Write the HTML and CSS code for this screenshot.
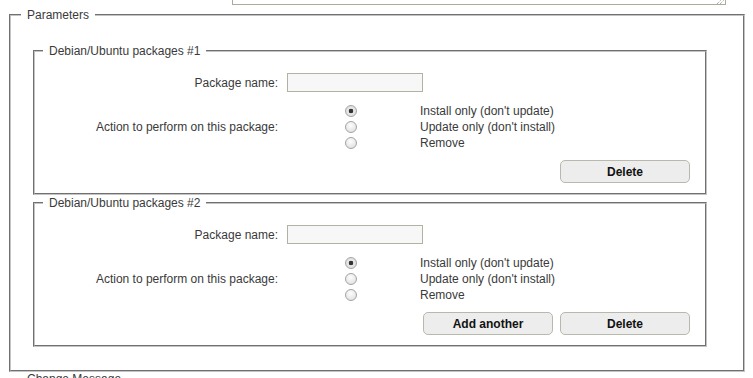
FILE: index.html
```html
<!DOCTYPE html>
<html lang="en">
<head>
  <meta charset="UTF-8" />
  <title>Package parameters</title>
  <link rel="stylesheet" href="styles.css">
</head>
<body>

<!-- tail of the previous field -->
<div class="prev-field">
  <svg class="grip" width="8" height="5" viewBox="0 0 8 5">
    <path d="M1 5 L6 0 M4 5 L8 1" stroke="#8a8a8a" stroke-width="1" stroke-dasharray="1 1" fill="none"/>
  </svg>
</div>

<!-- Parameters -->
<fieldset class="module">
  <legend>Parameters</legend>

  <fieldset class="pkg">
    <legend>Debian/Ubuntu packages #1</legend>
    <div class="row">
      <label class="lbl" for="name1">Package name:</label>
      <input id="name1" class="text" type="text">
    </div>
    <div class="row row-action">
      <span class="lbl">Action to perform on this package:</span>
      <div class="choices">
        <input type="radio" name="act1" id="a1i" checked><label for="a1i">Install only (don't update)</label>
        <input type="radio" name="act1" id="a1u"><label for="a1u">Update only (don't install)</label>
        <input type="radio" name="act1" id="a1r"><label for="a1r">Remove</label>
      </div>
    </div>
    <div class="actions">
      <button type="button">Delete</button>
    </div>
  </fieldset>

  <fieldset class="pkg">
    <legend>Debian/Ubuntu packages #2</legend>
    <div class="row">
      <label class="lbl" for="name2">Package name:</label>
      <input id="name2" class="text" type="text">
    </div>
    <div class="row row-action">
      <span class="lbl">Action to perform on this package:</span>
      <div class="choices">
        <input type="radio" name="act2" id="a2i" checked><label for="a2i">Install only (don't update)</label>
        <input type="radio" name="act2" id="a2u"><label for="a2u">Update only (don't install)</label>
        <input type="radio" name="act2" id="a2r"><label for="a2r">Remove</label>
      </div>
    </div>
    <div class="actions">
      <button type="button">Add another</button>
      <button type="button">Delete</button>
    </div>
  </fieldset>
</fieldset>

<!-- Change Message -->
<fieldset class="module next">
  <legend>Change Message</legend>
</fieldset>

</body>
</html>
```

FILE: styles.css
```css
* {
  box-sizing: border-box;
}

html, body {
  margin: 0;
  padding: 0;
  font-family: "Liberation Sans", Arial, sans-serif;
  font-size: 12px;
  color: #3a3a3a;
  background-color: #fff;
}

.prev-field {
  position: relative;
  margin-left: 232px;
  width: 494px;
  height: 5px;
  border: 1px solid #aaad9c;
  border-top: none;
}

.grip {
  position: absolute;
  right: 1px;
  bottom: 0;
}

fieldset {
  margin: 0;
  min-width: 0;
  border: 2px groove #c4c4c4;
}

legend {
  padding: 0 6px;
  line-height: 14px;
}

.module {
  margin: 3px 8px 0 9px;
  padding: 22px 10px 23px;
}

.next {
  margin-top: 0;
}

.pkg {
  margin: 0 26px 0 12px;
  padding: 15px 15px 10px 8px;
}

.pkg + .pkg {
  margin-top: 1px;
}

.row {
  display: grid;
  grid-template-columns: 235px 1fr;
  column-gap: 9px;
  align-items: center;
}

.row-action {
  margin-top: 11px;
}

.lbl {
  text-align: right;
}

.text {
  width: 136px;
  height: 19px;
  margin: 0;
  padding: 0 3px;
  border: 1px solid #b0b2a2;
  background-color: #f7f7f7;
  font: inherit;
}

.choices {
  display: grid;
  grid-template-columns: 128px auto;
  grid-auto-rows: 16px;
  column-gap: 5px;
  align-items: center;
}

.choices input {
  appearance: none;
  -webkit-appearance: none;
  justify-self: center;
  width: 12px;
  height: 12px;
  margin: 0;
  border: 1px solid #a4a4a4;
  border-radius: 50%;
  background: radial-gradient(circle at 45% 35%, #fdfdfd, #dadada);
}

.choices input:checked {
  background: radial-gradient(circle, #333 0 2px, #e9e9e9 2.6px, #d6d6d6);
}

.actions {
  display: flex;
  justify-content: flex-end;
  gap: 7px;
  margin-top: 9px;
}

.actions button {
  width: 130px;
  height: 23px;
  border: 1px solid #b8b9ac;
  border-radius: 5px;
  background-color: #ededed;
  font: bold 12px "Liberation Sans", Arial, sans-serif;
  color: #111;
}
```
